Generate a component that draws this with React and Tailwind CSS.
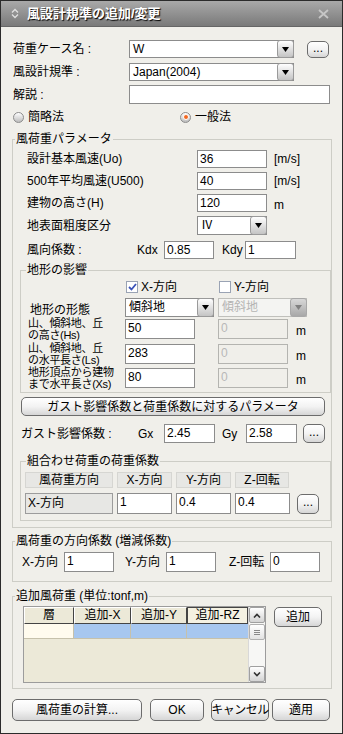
import React from "react";

const Input = ({ w, v = "", h = "h-[19px]", disabled, className = "" }) => (
  <div
    className={`${w} ${h} shrink-0 border px-[2px] text-[12px] leading-[16px] ${
      disabled
        ? "border-[#b4b4b0] bg-[#f0efea] text-[#b8b8b8]"
        : "border-[#8c8c8c] bg-white text-black"
    } ${className}`}
  >
    {v}
  </div>
);

const Arrow = ({ disabled }) => (
  <div
    className={`w-[17px] -my-px -mr-px shrink-0 rounded-[3px] border flex items-center justify-center ${
      disabled
        ? "border-[#a8a8a8] bg-gradient-to-b from-[#d8d8d8] to-[#a8a8a8]"
        : "border-[#9a9a9a] bg-gradient-to-b from-white to-[#c4c4c4]"
    }`}
  >
    <svg width="7" height="5" viewBox="0 0 7 5">
      <path d="M0 0h7L3.5 5z" fill={disabled ? "#808080" : "#000"} />
    </svg>
  </div>
);

const Combo = ({ w, v, h = "h-[19px]", disabled }) => (
  <div
    className={`${w} ${h} shrink-0 flex border ${
      disabled ? "border-[#c0c0bc] bg-[#f4f4f2]" : "border-[#8c8c8c] bg-white"
    }`}
  >
    <div
      className={`flex-1 px-[3px] text-[12px] leading-[16px] ${
        disabled ? "text-[#b4b4b4]" : "text-black"
      }`}
    >
      {v}
    </div>
    <Arrow disabled={disabled} />
  </div>
);

const Btn = ({ className = "", children }) => (
  <div
    className={`shrink-0 flex items-center justify-center whitespace-nowrap rounded-[5px] border border-[#6c6c6c] bg-gradient-to-b from-white via-[#f3f3f3] to-[#d6d6d6] text-[12px] leading-[14px] text-black ${className}`}
  >
    {children}
  </div>
);

const Dots = ({ className = "" }) => (
  <Btn className={`w-[22px] ${className}`}>
    <span className="-mt-[3px]">...</span>
  </Btn>
);

const Radio = ({ on }) => (
  <div className="w-[11px] h-[11px] rounded-full border border-[#8c8c8c] bg-gradient-to-b from-white to-[#bdbdbd] flex items-center justify-center">
    {on && (
      <div className="w-[6px] h-[6px] rounded-full bg-[#f2661f] border border-white" />
    )}
  </div>
);

const Check = ({ on }) => (
  <div className="w-[12px] h-[12px] border border-[#9aa3b4] bg-white flex items-center justify-center">
    {on && (
      <svg width="9" height="8" viewBox="0 0 9 8">
        <path d="M1 4l2.5 2.5L8 1" fill="none" stroke="#3a52b8" strokeWidth="1.8" />
      </svg>
    )}
  </div>
);

const Legend = ({ children, className = "ml-[2px]" }) => (
  <legend className={`${className} px-[1px] text-[12px] leading-[14px]`}>
    {children}
  </legend>
);

export default function App() {
  return (
    <div className="w-[343px] h-[734px] border border-[#2b2b2b] bg-[#f0efea] text-black font-['Liberation_Sans','Noto_Sans_CJK_JP',sans-serif] flex flex-col overflow-hidden">
      {/* title bar */}
      <div className="h-[26px] shrink-0 flex items-center bg-gradient-to-b from-[#a9a9a9] to-[#7a7a7a] border-b border-[#666]">
        <svg width="8" height="11" viewBox="0 0 8 11" className="ml-[10px]">
          <path d="M1 4.5L4 1.5L7 4.5M1 6.5L4 9.5L7 6.5" fill="none" stroke="#e0e0e0" strokeWidth="1.3" />
        </svg>
        <span className="ml-[8px] text-[13px] font-bold text-white [text-shadow:1px_1px_1px_#000]">
          風設計規準の追加/変更
        </span>
        <svg width="11" height="10" viewBox="0 0 11 10" className="ml-auto mr-[13px]">
          <path d="M1 1l9 8M10 1l-9 8" stroke="#c6c6c6" strokeWidth="1.8" />
        </svg>
      </div>

      <div className="px-[12px] text-[12px] leading-[14px]">
        <div className="mt-[13px] h-[18px] flex items-center">
          <span className="w-[116px]">荷重ケース名 :</span>
          <Combo w="w-[165px]" h="h-[18px]" v="W" />
          <Dots className="ml-[13px] h-[17px]" />
        </div>
        <div className="mt-[5px] h-[18px] flex items-center">
          <span className="w-[116px]">風設計規準 :</span>
          <Combo w="w-[165px]" h="h-[18px]" v="Japan(2004)" />
        </div>
        <div className="mt-[4px] h-[19px] flex items-center">
          <span className="w-[116px]">解説 :</span>
          <Input w="w-[201px]" />
        </div>
        <div className="mt-[6px] h-[14px] flex items-center">
          <div className="w-[167px] flex items-center gap-[4px]">
            <Radio />
            <span>簡略法</span>
          </div>
          <div className="flex items-center gap-[4px]">
            <Radio on />
            <span>一般法</span>
          </div>
        </div>

        {/* 風荷重パラメータ */}
        <fieldset className="mt-[8px] -ml-px w-[320px] border border-[#cdcdc6] pb-[6px]">
          <Legend>風荷重パラメータ</Legend>
          <div className="pl-[14px]">
            <div className="mt-[4px] h-[18px] flex items-center">
              <span className="w-[170px]">設計基本風速(Uo)</span>
              <Input w="w-[70px]" h="h-[18px]" v="36" />
              <span className="ml-[7px]">[m/s]</span>
            </div>
            <div className="mt-[4px] h-[18px] flex items-center">
              <span className="w-[170px]">500年平均風速(U500)</span>
              <Input w="w-[70px]" h="h-[18px]" v="40" />
              <span className="ml-[7px]">[m/s]</span>
            </div>
            <div className="mt-[4px] h-[18px] flex items-center">
              <span className="w-[170px]">建物の高さ(H)</span>
              <Input w="w-[70px]" h="h-[18px]" v="120" />
              <span className="ml-[7px] mt-[4px]">m</span>
            </div>
            <div className="mt-[4px] h-[19px] flex items-center">
              <span className="w-[170px]">地表面粗度区分</span>
              <Combo w="w-[70px]" v="Ⅳ" />
            </div>
            <div className="mt-[6px] h-[18px] flex items-center">
              <span className="w-[110px]">風向係数 :</span>
              <span className="w-[27px]">Kdx</span>
              <Input w="w-[50px]" h="h-[18px]" v="0.85" />
              <span className="ml-[8px] w-[23px]">Kdy</span>
              <Input w="w-[51px]" h="h-[18px]" v="1" />
            </div>
          </div>

          {/* 地形の影響 */}
          <fieldset className="mt-[4px] ml-[7px] w-[311px] border border-[#cdcdc6] pb-[4px]">
            <Legend className="ml-[5px]">地形の影響</Legend>
            <div className="mt-[3px] h-[14px] pl-[105px] flex items-center">
              <div className="w-[93px] flex items-center gap-[3px]">
                <Check on />
                <span>X-方向</span>
              </div>
              <div className="flex items-center gap-[3px]">
                <Check />
                <span>Y-方向</span>
              </div>
            </div>
            <div className="mt-[4px] h-[19px] pl-[7px] flex items-end">
              <span className="w-[97px] pl-[2px] leading-[13px]">地形の形態</span>
              <Combo w="w-[89px]" v="傾斜地" />
              <div className="ml-[4px]">
                <Combo w="w-[89px]" v="傾斜地" disabled />
              </div>
            </div>
            {[
              ["山、傾斜地、丘", "の高さ(Hs)", "50", "mt-[2px]"],
              ["山、傾斜地、丘", "の水平長さ(Ls)", "283", "mt-[5px]"],
              ["地形頂点から建物", "まで水平長さ(Xs)", "80", "mt-[4px]"],
            ].map(([a, b, v, mt]) => (
              <div key={b} className={`${mt} h-[20px] pl-[7px] flex items-center`}>
                <div className="w-[97px] text-[11px] leading-[12px] tracking-[-0.3px] whitespace-nowrap">
                  <div>{a}</div>
                  <div>{b}</div>
                </div>
                <Input w="w-[70px]" h="h-[20px]" v={v} />
                <Input w="w-[70px]" h="h-[20px]" v="0" disabled className="ml-[23px]" />
                <span className="ml-[8px] mt-[4px]">m</span>
              </div>
            ))}
          </fieldset>

          <Btn className="mt-[4px] ml-[8px] w-[304px] h-[19px]">
            ガスト影響係数と荷重係数に対するパラメータ
          </Btn>

          <div className="mt-[8px] h-[19px] pl-[8px] flex items-center">
            <span className="w-[117px]">ガスト影響係数 :</span>
            <span className="w-[26px]">Gx</span>
            <Input w="w-[51px]" v="2.45" />
            <span className="ml-[7px] w-[24px]">Gy</span>
            <Input w="w-[51px]" v="2.58" />
            <Dots className="ml-[6px] h-[19px]" />
          </div>

          {/* 組合わせ荷重の荷重係数 */}
          <fieldset className="mt-[11px] ml-[7px] w-[311px] border border-[#cdcdc6] pb-[6px]">
            <Legend className="ml-[5px]">組合わせ荷重の荷重係数</Legend>
            <div className="mt-[4px] pl-[4px] h-[16px] flex items-stretch gap-[4px] text-center">
              <div className="w-[88px] bg-[#e7e7e4] border border-[#d6d6d2] leading-[14px]">風荷重方向</div>
              <div className="w-[55px] bg-[#e7e7e4] border border-[#d6d6d2] leading-[14px]">X-方向</div>
              <div className="w-[55px] bg-[#e7e7e4] border border-[#d6d6d2] leading-[14px]">Y-方向</div>
              <div className="w-[54px] bg-[#e7e7e4] border border-[#d6d6d2] leading-[14px]">Z-回転</div>
            </div>
            <div className="mt-[5px] pl-[4px] h-[21px] flex items-center gap-[4px]">
              <div className="w-[88px] h-[21px] bg-[#e7e7e4] border border-[#9c9c9c] px-[2px] leading-[18px]">X-方向</div>
              <Input w="w-[55px]" h="h-[21px]" v="1" />
              <Input w="w-[55px]" h="h-[21px]" v="0.4" />
              <Input w="w-[55px]" h="h-[21px]" v="0.4" />
              <Dots className="ml-[3px] h-[20px]" />
            </div>
          </fieldset>
        </fieldset>

        {/* 風荷重の方向係数 */}
        <fieldset className="mt-[6px] -ml-px w-[320px] border border-[#cdcdc6] pb-[9px]">
          <Legend>風荷重の方向係数 (増減係数)</Legend>
          <div className="mt-[4px] h-[20px] pl-[9px] flex items-center">
            <span className="w-[42px]">X-方向</span>
            <Input w="w-[50px]" h="h-[20px]" v="1" />
            <span className="ml-[11px] w-[41px]">Y-方向</span>
            <Input w="w-[50px]" h="h-[20px]" v="1" />
            <span className="ml-[13px] w-[41px]">Z-回転</span>
            <Input w="w-[50px]" h="h-[20px]" v="0" />
          </div>
        </fieldset>

        {/* 追加風荷重 */}
        <fieldset className="mt-[7px] -ml-px w-[320px] border border-[#cdcdc6] pb-[5px]">
          <Legend>追加風荷重 (単位:tonf,m)</Legend>
          <div className="mt-[3px] ml-[10px] flex items-start">
            <div className="w-[243px] h-[77px] border border-[#9c9c9c] flex">
              <div className="w-[224px] bg-[#ece9d8] flex flex-col">
                <div className="h-[17px] flex text-center leading-[15px]">
                  <div className="w-[50px] border border-r-[#444] border-b-[#444] border-t-white border-l-white">層</div>
                  <div className="w-[57px] border border-r-[#444] border-b-[#444] border-t-white border-l-white">追加-X</div>
                  <div className="w-[56px] border border-r-[#444] border-b-[#444] border-t-white border-l-white">追加-Y</div>
                  <div className="w-[61px] border border-[#444] bg-[#f4f1e2]">追加-RZ</div>
                </div>
                <div className="h-[15px] flex">
                  <div className="w-[50px] bg-[#fffbee] border-r border-b border-[#c6c1ab]" />
                  <div className="w-[57px] bg-[#a7c7ef] border-r border-b border-[#c6c1ab]" />
                  <div className="w-[56px] bg-[#a7c7ef] border-r border-b border-[#c6c1ab]" />
                  <div className="w-[61px] bg-[#a7c7ef] border-b border-[#c6c1ab]" />
                </div>
              </div>
              <div className="w-[17px] bg-[#f7f7f5] flex flex-col border-l border-[#d8d8d8]">
                <div className="h-[16px] rounded-[2px] border border-[#a0a0a0] bg-gradient-to-b from-white to-[#d4d4d4] flex items-center justify-center">
                  <svg width="8" height="5" viewBox="0 0 8 5">
                    <path d="M1 4.5L4 1.5L7 4.5" fill="none" stroke="#333" strokeWidth="1.6" />
                  </svg>
                </div>
                <div className="mt-[1px] h-[16px] rounded-[2px] border border-[#b0b0b0] bg-gradient-to-b from-white to-[#e2e2e2] flex flex-col items-center justify-center gap-[1px]">
                  <div className="w-[6px] h-px bg-[#888]" />
                  <div className="w-[6px] h-px bg-[#888]" />
                  <div className="w-[6px] h-px bg-[#888]" />
                </div>
                <div className="flex-1" />
                <div className="h-[16px] rounded-[2px] border border-[#a0a0a0] bg-gradient-to-b from-white to-[#d4d4d4] flex items-center justify-center">
                  <svg width="8" height="5" viewBox="0 0 8 5">
                    <path d="M1 0.5L4 3.5L7 0.5" fill="none" stroke="#333" strokeWidth="1.6" />
                  </svg>
                </div>
              </div>
            </div>
            <Btn className="ml-[8px] mt-px w-[48px] h-[20px]">追加</Btn>
          </div>
        </fieldset>

        <div className="mt-[10px] h-[22px] flex items-center">
          <Btn className="-ml-px w-[130px] h-[22px]">風荷重の計算...</Btn>
          <Btn className="ml-[8px] w-[54px] h-[22px]">OK</Btn>
          <Btn className="ml-[7px] w-[58px] h-[22px] text-[11px] tracking-[-0.5px]">キャンセル</Btn>
          <Btn className="ml-[3px] w-[58px] h-[22px]">適用</Btn>
        </div>
      </div>
    </div>
  );
}
